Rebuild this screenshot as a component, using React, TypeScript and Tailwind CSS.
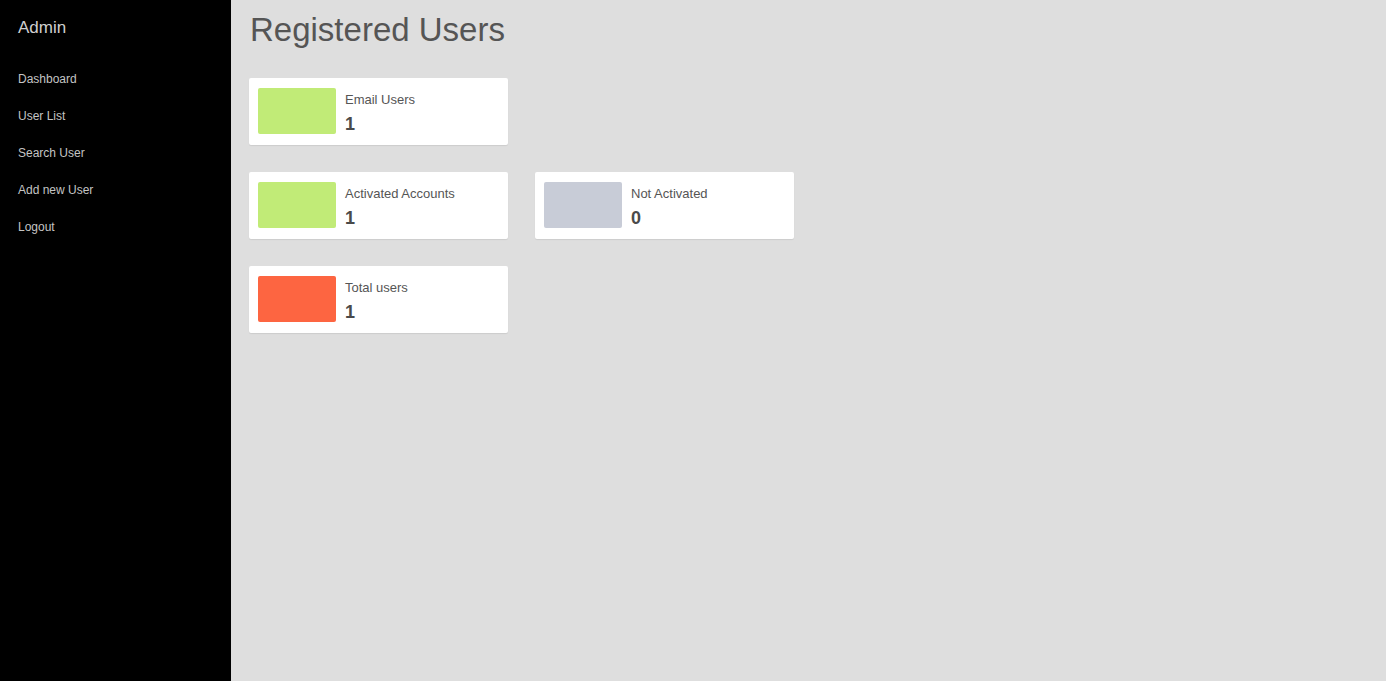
import React from "react";

interface StatItem {
  label: string;
  value: number;
  color: string;
}

const menu = ["Dashboard", "User List", "Search User", "Add new User", "Logout"];

const rows: StatItem[][] = [
  [{ label: "Email Users", value: 1, color: "bg-[#c1eb77]" }],
  [
    { label: "Activated Accounts", value: 1, color: "bg-[#c1eb77]" },
    { label: "Not Activated", value: 0, color: "bg-[#c8ccd7]" },
  ],
  [{ label: "Total users", value: 1, color: "bg-[#fd6541]" }],
];

const StatCard: React.FC<{ item: StatItem }> = ({ item }) => (
  <div className="w-[259px] h-[67px] bg-white rounded-[2px] shadow-[0_1px_1px_rgba(0,0,0,0.08)] pl-[9px] pt-[10px] flex gap-[9px]">
    <div className={`w-[78px] h-[46px] rounded-[2px] ${item.color}`} />
    <div className="flex flex-col pt-[4px]">
      <span className="text-[13px] leading-[16px] text-[#555]">{item.label}</span>
      <span className="text-[18px] leading-[22px] font-bold text-[#4a4a4a] mt-[5px]">{item.value}</span>
    </div>
  </div>
);

export default function App() {
  return (
    <div className="flex min-h-[681px] font-['Liberation_Sans',Arial,sans-serif]">
      <aside className="w-[231px] shrink-0 bg-black px-[18px] pt-[17px]">
        <div className="text-[17px] leading-[22px] text-[#cfcfcf]">Admin</div>
        <nav className="flex flex-col gap-[22px] mt-[33px]">
          {menu.map((m) => (
            <a key={m} className="text-[12px] leading-[15px] text-[#c4c4c4]">{m}</a>
          ))}
        </nav>
      </aside>
      <main className="flex-1 bg-[#dedede] pl-[18px] pt-[10px]">
        <h1 className="text-[33px] leading-[40px] text-[#555] pl-[1px]">Registered Users</h1>
        <div className="flex flex-col gap-[27px] mt-[28px]">
          {rows.map((row, i) => (
            <div key={i} className="flex gap-[27px]">
              {row.map((item) => (
                <StatCard key={item.label} item={item} />
              ))}
            </div>
          ))}
        </div>
      </main>
    </div>
  );
}
